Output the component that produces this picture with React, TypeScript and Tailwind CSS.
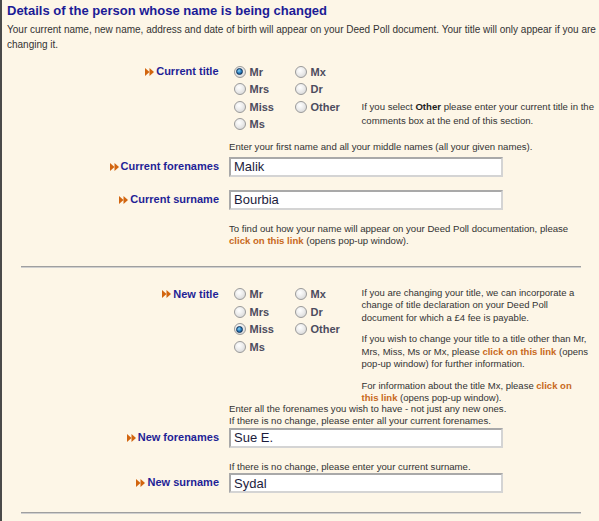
import React from 'react';

const font = { fontFamily: '"Liberation Sans", Arial, sans-serif' };

const Arrow = () => (
	<svg width="9" height="8" viewBox="0 0 9 8" className="mr-[2px] shrink-0">
		<polygon points="0,0 4.5,4 0,8" fill="#d2650f" />
		<polygon points="4.5,0 9,4 4.5,8" fill="#d2650f" />
	</svg>
);

const Label = ({ text }: { text: string }) => (
	<div className="w-[212px] h-[17.5px] flex items-center justify-end text-[11px] font-bold text-[#1f1f96] leading-[17.5px]">
		<Arrow />
		<span>{text}</span>
	</div>
);

const Radio = ({ label, checked }: { label: string; checked?: boolean }) => (
	<div className="h-[17.5px] flex items-center">
		<span className="w-[12px] h-[12px] rounded-full border border-[#9a9a9a] bg-[radial-gradient(circle_at_40%_35%,#ffffff_0%,#ececec_45%,#cfcfcf_100%)] flex items-center justify-center shrink-0">
			{checked && (
				<span className="w-[7px] h-[7px] rounded-full border border-[#0d2f55] bg-[radial-gradient(circle_at_40%_35%,#8fd6f5_0%,#2a7fc0_50%,#0b3f78_100%)]" />
			)}
		</span>
		<span className="ml-[4px] text-[11px] font-bold text-[#4c4c5e]">{label}</span>
	</div>
);

const TitleRadios = ({ selected }: { selected: string }) => (
	<div className="flex pl-[5px]">
		<div className="w-[61px] flex flex-col">
			{['Mr', 'Mrs', 'Miss', 'Ms'].map((t) => (
				<Radio key={t} label={t} checked={selected === t} />
			))}
		</div>
		<div className="w-[67px] flex flex-col">
			{['Mx', 'Dr', 'Other'].map((t) => (
				<Radio key={t} label={t} checked={selected === t} />
			))}
		</div>
	</div>
);

// text box row: label on the left, input lined up at x=229
const InputRow = ({ label, value, className = '' }: { label: string; value: string; className?: string }) => (
	<div className={`flex items-center ${className}`}>
		<Label text={label} />
		<input
			readOnly
			value={value}
			className="block ml-[10px] w-[274px] h-[20px] bg-white border-2 border-t-[#a9a9a9] border-l-[#a9a9a9] border-r-[#d4d4d4] border-b-[#d4d4d4] px-[3px] text-[13px] leading-[16px] text-[#1c1c3c] outline-none"
			style={font}
		/>
	</div>
);

const Hint = ({ children, className = '' }: { children: React.ReactNode; className?: string }) => (
	<div className={`ml-[222px] text-[9.6px] leading-[12.5px] text-[#333] ${className}`}>{children}</div>
);

const Link = ({ children }: { children: React.ReactNode }) => (
	<span className="font-bold text-[#c8691c]">{children}</span>
);

export default function App() {
	return (
		<div className="min-h-[521px] w-full bg-[#fdf6e7] border-l-2 border-[#4a4a4a] pl-[5px] pr-[2px]" style={font}>
			<h1 className="pt-[3px] text-[13px] font-bold leading-[16px] text-[#1b1b96]">
				Details of the person whose name is being changed
			</h1>
			<p className="mt-[3px] text-[10px] leading-[15px] text-[#333]">
				Your current name, new name, address and date of birth will appear on your Deed Poll document. Your title will
				only appear if you are changing it.
			</p>

			<div className="mt-[11px] flex items-start">
				<Label text="Current title" />
				<div className="ml-[10px]">
					<TitleRadios selected="Mr" />
				</div>
				<div className="w-[236px] self-end pb-[5px] text-[9.6px] leading-[14px] text-[#333]">
					If you select <span className="font-bold text-[#222]">Other</span> please enter your current title in the
					comments box at the end of this section.
				</div>
			</div>

			<Hint className="mt-[8px]">Enter your first name and all your middle names (all your given names).</Hint>
			<InputRow label="Current forenames" value="Malik" className="mt-[3px]" />
			<InputRow label="Current surname" value="Bourbia" className="mt-[13px]" />
			<Hint className="mt-[13px] w-[352px]">
				To find out how your name will appear on your Deed Poll documentation, please <Link>click on this link</Link>{' '}
				(opens pop-up window).
			</Hint>

			<div className="mt-[18px] ml-[14px] w-[560px] h-[2px] border-t border-[#9f9f9f] bg-[#cfcfcf]" />

			<div className="mt-[18px] flex items-start">
				<Label text="New title" />
				<div className="ml-[10px]">
					<TitleRadios selected="Miss" />
				</div>
				<div className="w-[236px] pt-[1px] text-[9.5px] leading-[12.5px] text-[#333] whitespace-nowrap flex flex-col gap-[9px]">
					<p>
						If you are changing your title, we can incorporate a<br />
						change of title declaration on your Deed Poll
						<br />
						document for which a £4 fee is payable.
					</p>
					<p>
						If you wish to change your title to a title other than Mr,
						<br />
						Mrs, Miss, Ms or Mx, please <Link>click on this link</Link> (opens
						<br />
						pop-up window) for further information.
					</p>
					<p>
						For information about the title Mx, please <Link>click on</Link>
						<br />
						<Link>this link</Link> (opens pop-up window).
					</p>
				</div>
			</div>

			<Hint className="-mt-[2px]">
				Enter all the forenames you wish to have - not just any new ones.
				<br />
				If there is no change, please enter all your current forenames.
			</Hint>
			<InputRow label="New forenames" value="Sue E." className="mt-0" />
			<Hint className="mt-[13px]">If there is no change, please enter your current surname.</Hint>
			<InputRow label="New surname" value="Sydal" className="mt-0" />

			<div className="mt-[19px] ml-[14px] w-[560px] h-[2px] border-t border-[#9f9f9f] bg-[#cfcfcf]" />
		</div>
	);
}
